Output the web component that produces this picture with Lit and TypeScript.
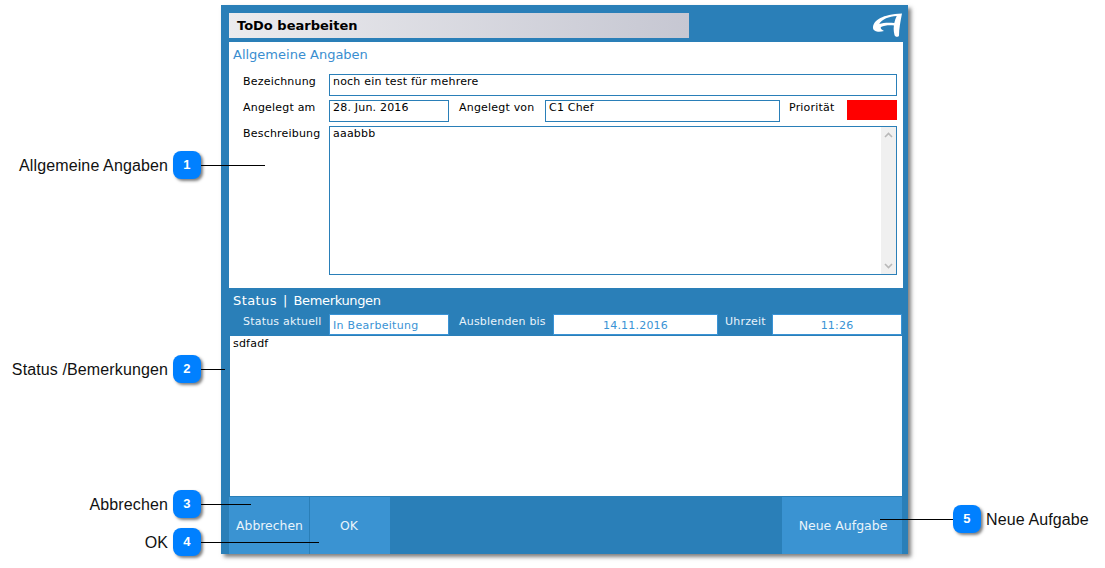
import { LitElement, html, css, svg } from "lit";
import { customElement } from "lit/decorators.js";

const callouts = [
  { n: 1, label: "Allgemeine Angaben", y: 165, lineTo: 265 },
  { n: 2, label: "Status /Bemerkungen", y: 369, lineTo: 225 },
  { n: 3, label: "Abbrechen", y: 504, lineTo: 251 },
  { n: 4, label: "OK", y: 542, lineTo: 319 },
];

const logo = svg`<svg class="logo" width="29" height="24" viewBox="0 0 29 24"><path fill="#fff" fill-rule="evenodd" d="M0 14C1 7 9 1.5 29 .5C27.5 8 26 16 26 22.5C26 24 22 24.5 21.5 22C20.5 18 20.5 15 21 12.5C16 12 11 12.5 8 14C7 15.5 9 17 11 18C6 19.5 -.5 19 0 14ZM6.2 11C9 6 16 3.5 23.7 3C22.6 5.5 21.7 7.8 21.3 10C16 9.3 10.5 9.6 6.2 11Z"/></svg>`;

@customElement("app-root")
export class AppRoot extends LitElement {
  static styles = css`
    :host { display: block; position: relative; width: 1105px; height: 568px; overflow: hidden; background: #fff; font-family: "DejaVu Sans", Verdana, sans-serif; font-size: 11px; letter-spacing: .2px; color: #000; }
    .win { position: absolute; left: 221px; top: 5px; width: 687px; height: 549px; box-sizing: border-box; background: #2a7fb8; padding-top: 8px; box-shadow: 3px 3px 4px rgba(0,0,0,.5); display: flex; flex-direction: column; }
    .head { display: flex; justify-content: space-between; height: 25px; margin: 0 6px 4px 8px; }
    .title { width: 460px; box-sizing: border-box; padding-left: 8px; line-height: 25px; font-weight: 700; font-size: 13px; letter-spacing: 0; background: linear-gradient(90deg, #ebebee, #c6c7d2); }
    .panel { margin: 0 5px 0 8px; height: 246px; box-sizing: border-box; background: #fff; padding: 5px 6px 0 4px; }
    .h { font-size: 13px; line-height: 16px; letter-spacing: 0; color: #3a8ed0; height: 27px; }
    .row { display: flex; margin-left: 10px; }
    .row1 { height: 26px; }
    .lab { line-height: 14px; padding-top: 1px; white-space: nowrap; }
    .l86 { width: 86px; } .l58 { width: 58px; }
    .box { box-sizing: border-box; border: 1px solid #2a7fb8; padding: 0 3px; line-height: 14px; height: 22px; white-space: nowrap; }
    .grow { width: 568px; }
    .ml10 { margin-left: 10px; } .ml9 { margin-left: 9px; }
    .red { width: 50px; height: 20px; background: #f00; }
    .area { position: relative; height: 149px; }
    .sb { position: absolute; right: 0; top: 0; bottom: 0; width: 15px; background: #f0f0f0; display: flex; flex-direction: column; justify-content: space-between; align-items: center; padding: 5px 0; box-sizing: border-box; }
    .status { height: 48px; box-sizing: border-box; padding: 5px 0 0 12px; color: #fff; }
    .status .h { color: #fff; height: 21px; word-spacing: 2px; }
    .w1 { letter-spacing: .4px; } .w2 { letter-spacing: -.35px; }
    .srow { display: flex; margin-left: 10px; color: #e8f3fb; }
    .sbox { box-sizing: border-box; height: 21px; background: #fff; border: 1px solid #3a93d5; color: #3a93d5; line-height: 20px; padding: 0 3px; white-space: nowrap; padding-top: 1px; }
    .sbox.wide { letter-spacing: .3px; }
    .c { text-align: center; }
    .note { margin: 0 6px 0 9px; height: 160px; box-sizing: border-box; background: #fff; padding: 1px 3px; line-height: 14px; }
    .btns { flex: 1; margin-top: 1px; display: flex; margin-left: 8px; margin-right: 6px; }
    .btn { box-sizing: border-box; background: #3a93d2; color: #e9f4fb; display: flex; align-items: center; justify-content: center; font-size: 12.4px; letter-spacing: 0; width: 80px; }
    .btn + .btn { margin-left: 1px; }
    .btn.first { padding-left: 1px; }
    .btn.ok { padding-right: 2px; }
    .btn.new { margin-left: auto; width: 120px; padding-left: 2px; font-size: 12.5px; }
    .co { position: absolute; left: 0; width: 201px; display: flex; justify-content: flex-end; align-items: center; height: 28px; font: 16px "Liberation Sans", Arial, sans-serif; letter-spacing: .12px; color: #111; white-space: nowrap; }
    .co span { padding-top: 1px; }
    .co.right { left: 953px; width: auto; justify-content: flex-start; }
    .badge { width: 28px; height: 28px; margin-left: 5px; border-radius: 8px; background: #0080ff; color: #fff; font: 700 13px/28px "Liberation Sans", Arial, sans-serif; text-align: center; box-shadow: 2px 2px 3px rgba(0,0,0,.5); flex: none; }
    .co.right .badge { margin: 0 5px 0 0; }
    .line { position: absolute; height: 1px; background: #000; }
  `;

  render() {
    const chevron = (d: string) => svg`<svg width="9" height="6" viewBox="0 0 9 6"><path d=${d} fill="none" stroke="#b8b8b8" stroke-width="1.6"/></svg>`;
    return html`
      <div class="win">
        <div class="head"><div class="title">ToDo bearbeiten</div>${logo}</div>
        <div class="panel">
          <div class="h">Allgemeine Angaben</div>
          <div class="row row1"><div class="lab l86">Bezeichnung</div><div class="box grow">noch ein test für mehrere</div></div>
          <div class="row row1">
            <div class="lab l86">Angelegt am</div><div class="box" style="width:120px">28. Jun. 2016</div>
            <div class="lab ml10 l86">Angelegt von</div><div class="box" style="width:235px">C1 Chef</div>
            <div class="lab ml9 l58">Priorität</div><div class="red"></div>
          </div>
          <div class="row">
            <div class="lab l86">Beschreibung</div>
            <div class="box grow area">aaabbb
              <div class="sb">${chevron("M1 5L4.5 1.5L8 5")}${chevron("M1 1L4.5 4.5L8 1")}</div>
            </div>
          </div>
        </div>
        <div class="status">
          <div class="h"><span class="w1">Status</span> | <span class="w2">Bemerkungen</span></div>
          <div class="srow">
            <div class="lab l86">Status aktuell</div><div class="sbox wide" style="width:120px">In Bearbeitung</div>
            <div class="lab ml10" style="width:94px">Ausblenden bis</div><div class="sbox c" style="width:165px">14.11.2016</div>
            <div class="lab" style="width:47px;margin-left:7px">Uhrzeit</div><div class="sbox c" style="width:130px">11:26</div>
          </div>
        </div>
        <div class="note">sdfadf</div>
        <div class="btns">
          <div class="btn first">Abbrechen</div><div class="btn ok">OK</div><div class="btn new">Neue Aufgabe</div>
        </div>
      </div>
      ${callouts.map((c) => html`
        <div class="line" style="left:201px;top:${c.y}px;width:${c.lineTo - 201}px"></div>
        <div class="co" style="top:${c.y - 14}px"><span>${c.label}</span><div class="badge">${c.n}</div></div>`)}
      <div class="line" style="left:880px;top:519px;width:73px"></div>
      <div class="co right" style="top:505px"><div class="badge">5</div><span>Neue Aufgabe</span></div>
    `;
  }
}
